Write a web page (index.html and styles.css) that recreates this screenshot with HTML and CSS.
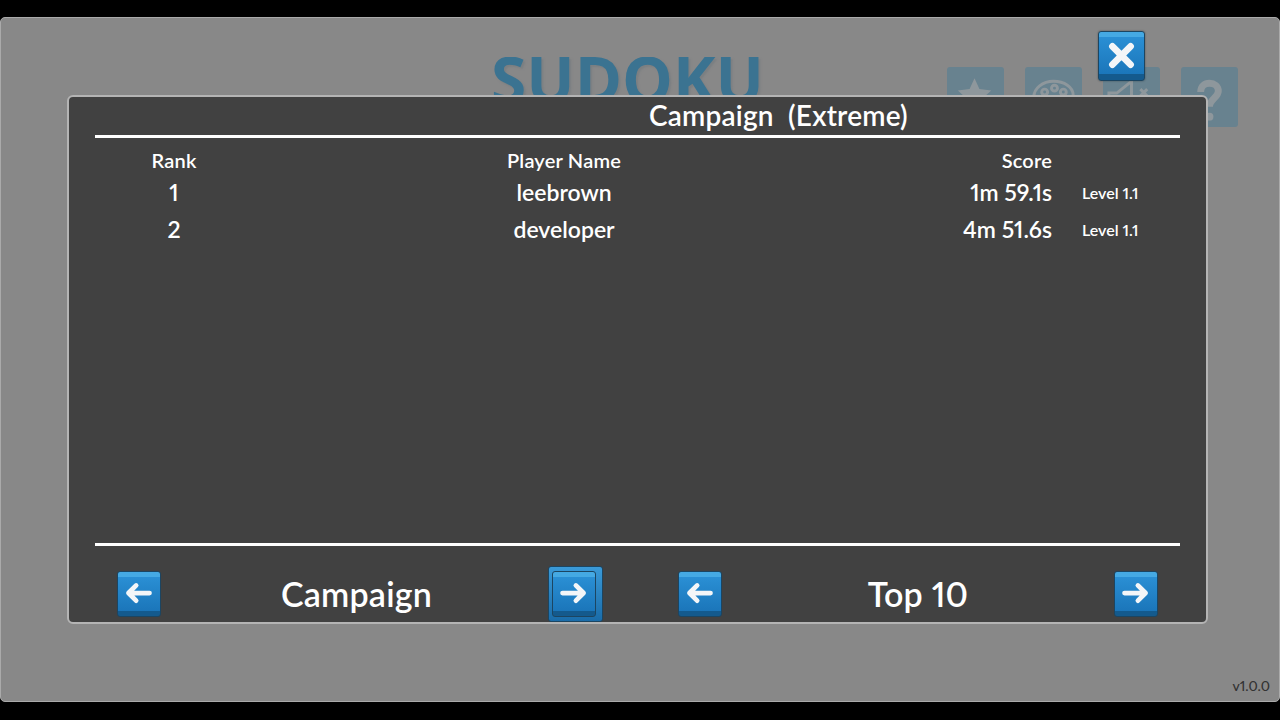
FILE: index.html
```html
<!DOCTYPE html>
<html lang="en">
<head>
    <meta charset="UTF-8">
    <title>Sudoku - Leaderboard</title>
    <link rel="stylesheet" href="styles.css">
</head>
<body>
<div class="screen">
    <div class="menu">
        <div class="logo">SUDOKU</div>
        <div class="menu-icons">
            <div class="menu-icon">
                <svg viewBox="0 0 58 58"><path d="M28 11l5 11 12 1.500-9 8 2.500 12L28 37.500 17.500 43.500l2.500-12-9-8 12-1.500z"/></svg>
            </div>
            <div class="menu-icon">
                <svg viewBox="0 0 58 58"><path class="line" d="M29 14c-11 0-20 7-20 16s8 15 18 15c4 0 4-3 3-5s0-5 4-5h7c5 0 8-3 8-7 0-8-9-14-20-14z"/><circle class="line" cx="20" cy="25" r="3"/><circle class="line" cx="30" cy="21" r="3"/><circle class="line" cx="39" cy="25" r="3"/></svg>
            </div>
            <div class="menu-icon">
                <svg viewBox="0 0 58 58"><path class="line" d="M6 26h8l15-12v32L14 36H6z"/><path class="line" d="M38 22l7 7m0-7l-7 7"/></svg>
            </div>
            <div class="menu-icon">
                <svg viewBox="0 0 58 58"><path class="thick" d="M20 25c0-6 4-9 9-9s9 3 9 8c0 7-9 8-9 16"/><circle cx="29" cy="50" r="4"/></svg>
            </div>
        </div>
    </div>
    <div class="version">v1.0.0</div>

    <div class="dialog">
        <div class="dialog-title">Campaign&nbsp; (Extreme)</div>
        <div class="scores">
            <div class="score-row head">
                <div class="rank">Rank</div>
                <div class="name">Player Name</div>
                <div class="score">Score</div>
                <div class="level"></div>
            </div>
            <div class="score-row">
                <div class="rank">1</div>
                <div class="name">leebrown</div>
                <div class="score">1m 59.1s</div>
                <div class="level">Level 1.1</div>
            </div>
            <div class="score-row">
                <div class="rank">2</div>
                <div class="name">developer</div>
                <div class="score">4m 51.6s</div>
                <div class="level">Level 1.1</div>
            </div>
        </div>
        <div class="dialog-footer">
            <div class="picker picker-mode">
                <button class="btn" type="button">
                    <svg viewBox="0 0 44 46"><path d="M33 22H11M19 14l-8 8 8 8"/></svg>
                </button>
                <div class="picker-label">Campaign</div>
                <button class="btn btn-hover" type="button">
                    <svg viewBox="0 0 44 46"><path d="M10 22h22M24 14l8 8-8 8"/></svg>
                </button>
            </div>
            <div class="picker picker-range">
                <button class="btn" type="button">
                    <svg viewBox="0 0 44 46"><path d="M33 22H11M19 14l-8 8 8 8"/></svg>
                </button>
                <div class="picker-label">Top 10</div>
                <button class="btn" type="button">
                    <svg viewBox="0 0 44 46"><path d="M10 22h22M24 14l8 8-8 8"/></svg>
                </button>
            </div>
        </div>
    </div>

    <button class="btn btn-close" type="button">
        <svg viewBox="0 0 47 50"><path d="M14 15l19 19M33 15L14 34"/></svg>
    </button>
</div>
</body>
</html>
```

FILE: styles.css
```css
html, body {
    margin: 0;
    height: 100%;
    background: #000;
    overflow: hidden;
}
body {
    font-family: 'Lato', 'Noto Sans', sans-serif;
    font-variant-numeric: proportional-nums;
    color: #fff;
}
.screen {
    position: relative;
    box-sizing: border-box;
    height: 685px;
    margin-top: 17px;
    background: #888;
    border: 1px solid #aaa;
    border-radius: 5px;
}

/* main menu, dimmed behind the dialog */
.menu { display: flex; padding: 39px 41px 0 490px; }
.logo {
    font-family: 'Open Sans', sans-serif;
    font-weight: 700;
    font-size: 64px;
    line-height: 44px;
    height: 39px;
    overflow: hidden;
    color: #3b7391;
    text-shadow: 2px 2px 2px #7b7f82;
}
.menu-icons { display: flex; gap: 21px; margin: 10px 0 0 auto; }
.menu-icon {
    width: 57px;
    height: 60px;
    background: #68828f;
    border-radius: 3px;
}
.menu-icon svg { display: block; width: 57px; height: 58px; fill: #8e979c; }
.menu-icon .line { fill: none; stroke: #8e979c; stroke-width: 3; }
.menu-icon .thick { fill: none; stroke: #8e979c; stroke-width: 7; }
.version {
    position: absolute;
    right: 9px;
    bottom: 7px;
    font-size: 14px;
    font-weight: 500;
    color: #333;
}

.dialog {
    position: absolute;
    left: 66px;
    top: 77px;
    box-sizing: border-box;
    width: 1141px;
    height: 529px;
    padding: 0 26px;
    display: flex;
    flex-direction: column;
    background: #414141;
    border: 2px solid #b4b4b4;
    border-radius: 6px;
}
.dialog-title {
    height: 38px;
    line-height: 37px;
    padding-left: 554px;
    font-size: 28px;
    font-weight: 600;
    letter-spacing: 0.2px;
    border-bottom: 3px solid #fff;
    white-space: nowrap;
}
.scores { flex: 1; padding-top: 10px; border-bottom: 3px solid #fff; }
.score-row {
    display: grid;
    grid-template-columns: 158px 622px 177px 1fr;
    height: 37px;
    line-height: 37px;
    font-size: 23px;
    font-weight: 600;
}
.score-row.head { height: 26px; line-height: 25px; font-size: 20px; letter-spacing: 0.2px; }
.rank, .name { text-align: center; }
.score { text-align: right; }
.level { padding-left: 30px; font-size: 16px; }

.dialog-footer {
    display: flex;
    justify-content: space-between;
    height: 76px;
    padding: 25px 22px 0 22px;
    box-sizing: border-box;
    isolation: isolate;
}
.picker { display: flex; align-items: flex-start; }
.picker-mode { width: 479px; }
.picker-range { width: 480px; }
.picker-label {
    flex: 1;
    text-align: center;
    font-size: 34px;
    font-weight: 600;
    letter-spacing: 0.2px;
    line-height: 46px;
}

.btn {
    position: relative;
    width: 44px;
    height: 46px;
    padding: 0;
    border: 1px solid #1c4561;
    border-radius: 3px;
    background: linear-gradient(#45a9e3 0, #45a9e3 5px, #2a8fd4 5px, #1b76ba 88%, #145a8d 88%);
}
.btn svg {
    position: absolute;
    left: 0;
    top: 0;
    width: 100%;
    height: 100%;
    fill: none;
    stroke: #f4f6f8;
    stroke-width: 5;
    stroke-linecap: round;
    stroke-linejoin: round;
}
.btn-hover::before {
    content: "";
    position: absolute;
    left: -5px;
    top: -6px;
    width: 53px;
    height: 54px;
    border: 1px solid #1c4561;
    border-radius: 3px;
    background: linear-gradient(#3a9ad8, #1a6ca9);
    z-index: -1;
}
.btn-close {
    position: absolute;
    left: 1097px;
    top: 13px;
    width: 47px;
    height: 50px;
    box-shadow: 0 0 2px rgba(0, 0, 0, 0.4);
}
.btn-close svg { stroke-width: 7; }
```
